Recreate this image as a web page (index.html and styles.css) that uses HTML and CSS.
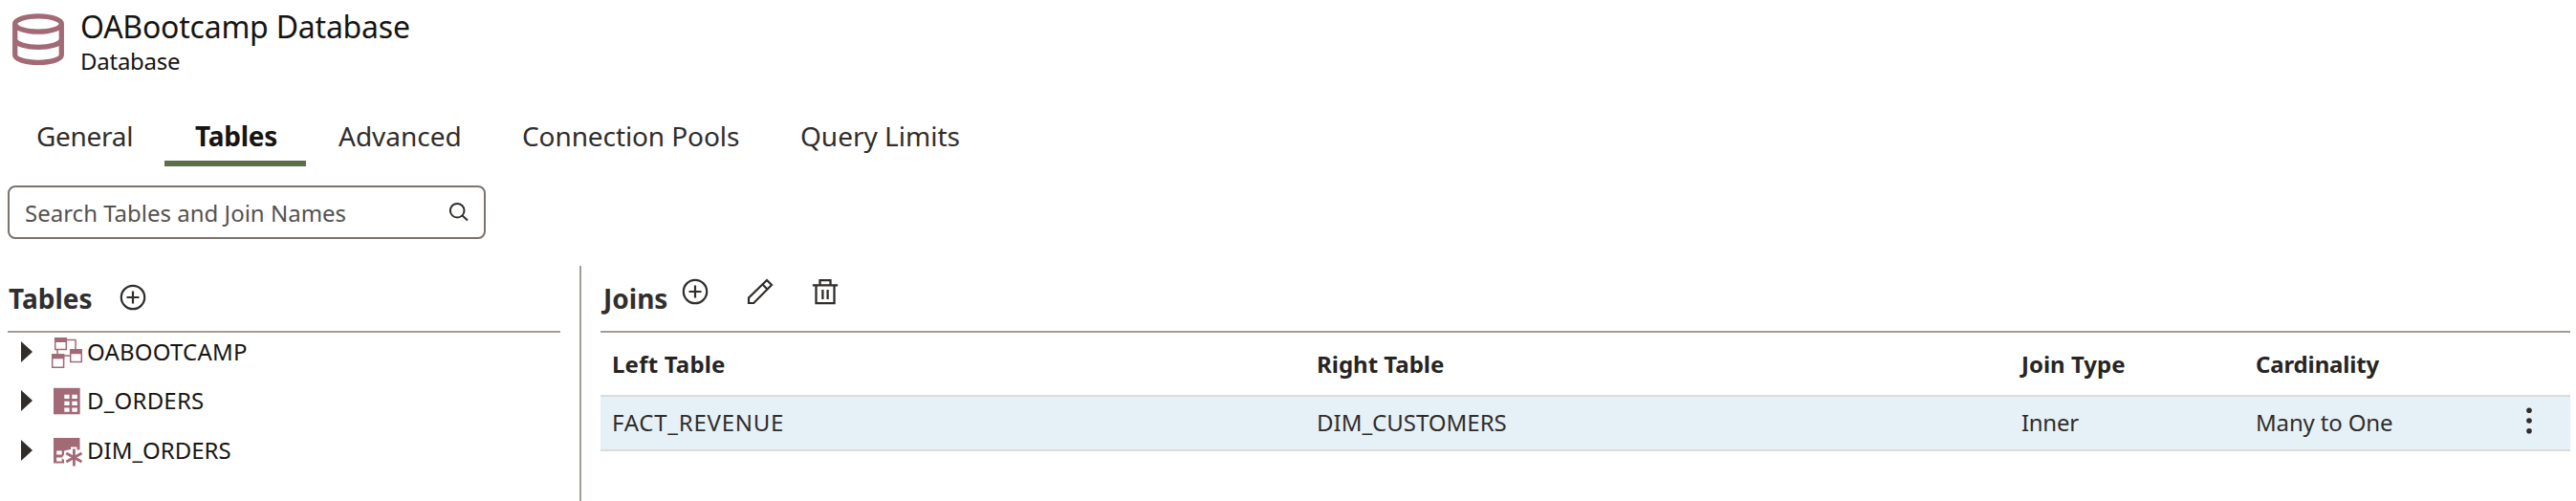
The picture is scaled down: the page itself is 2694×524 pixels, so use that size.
FILE: index.html
```
<!DOCTYPE html>
<html lang="en">
<head>
<meta charset="utf-8">
<title>OABootcamp Database</title>
<link rel="stylesheet" href="styles.css">
</head>
<body>
<div class="page">
  <header class="header">
    <svg class="db-icon" viewBox="12 13 56 56" fill="none" stroke="#a26a76" stroke-width="5.300">
      <ellipse cx="40" cy="25" rx="24.300" ry="8.200"/>
      <path d="M15.700 25v32.500c0 4.500 10.900 7.900 24.300 7.900s24.300-3.400 24.300-7.900V25"/>
      <path d="M15.700 42c1.500 4.200 11.700 7.300 24.300 7.300s22.800-3.100 24.300-7.300"/>
    </svg>
    <div>
      <h1 class="title">OABootcamp Database</h1>
      <p class="subtitle">Database</p>
    </div>
  </header>

  <nav class="tabs">
    <a class="tab general">General</a>
    <a class="tab active">Tables</a>
    <a class="tab">Advanced</a>
    <a class="tab pools">Connection Pools</a>
    <a class="tab">Query Limits</a>
  </nav>

  <div class="search">
    <span>Search Tables and Join Names</span>
    <svg class="search-icon" viewBox="468 210 24 24" fill="none" stroke="#312d2a" stroke-width="2">
      <circle cx="478.200" cy="220.200" r="7.300"/>
      <path d="M483.300 225.300l5.700 5.300"/>
    </svg>
  </div>

  <main class="split">
    <section class="left">
      <div class="bar">
        <h2>Tables</h2>
        <svg class="add" viewBox="0 0 28 28" fill="none" stroke="#312d2a" stroke-width="2.200">
          <circle cx="14" cy="14" r="12.200"/><path d="M14 7.500v13M7.500 14h13"/>
        </svg>
      </div>
      <ul class="tree">
        <li>
          <svg class="arrow" viewBox="0 0 12 22"><path d="M0 0l12 11L0 22z" fill="#312d2a"/></svg>
          <svg class="node" viewBox="52 351 35 35" fill="none" stroke="#a26a76" stroke-width="1.500">
            <path d="M70 355.500h9V365M60 366v5M67 372h6"/>
            <path fill="#fff" d="M57.700 353.700h11.600v11.800H57.700zM54.700 371h11.900v13.300H54.700zM73.700 365.700h11.600v12.900H73.700z"/>
            <path fill="#a26a76" stroke="none" d="M57 353h13v5H57zM54 370.300h13.300v5H54zM73 365h13v5.200H73z"/>
          </svg>
          <span class="wide">OABOOTCAMP</span>
        </li>
        <li>
          <svg class="arrow" viewBox="0 0 12 22"><path d="M0 0l12 11L0 22z" fill="#312d2a"/></svg>
          <svg class="node" viewBox="52 401.500 35 35">
            <path fill="#a26a76" d="M56 405.300h27.700v27.500H56z"/>
            <path fill="#fff" d="M67.300 412.300h5.300v4.200h-5.300zM75.300 412.300h5.500v4.200h-5.500zM67.300 419.200h5.300v4.200h-5.300zM75.300 419.200h5.500v4.200h-5.500zM67.300 426h5.300v4.200h-5.300zM75.300 426h5.500v4.200h-5.500z"/>
          </svg>
          <span class="wide">D_ORDERS</span>
        </li>
        <li>
          <svg class="arrow" viewBox="0 0 12 22"><path d="M0 0l12 11L0 22z" fill="#312d2a"/></svg>
          <svg class="node" viewBox="52 453.500 35 35">
            <path fill="#a26a76" d="M56 457.500h27.500V484H56z"/>
            <path fill="#fff" d="M59.200 471h5.500v4h-5.500zM59.200 478h5.500v4h-5.500zM67 484.500v-4l-2.500-2 2.500-3.500V471l7-1.500V467h6.500v3H84v15z"/>
            <path stroke="#a26a76" stroke-width="2.800" d="M77.400 469v18M69.300 473.500l16.200 9M69.300 482.500l16.200-9"/>
          </svg>
          <span>DIM_ORDERS</span>
        </li>
      </ul>
    </section>

    <section class="right">
      <div class="bar">
        <h2 class="joins">Joins</h2>
        <div class="tools">
          <svg viewBox="0 0 28 28" fill="none" stroke="#312d2a" stroke-width="2.200">
            <circle cx="14" cy="14" r="12.200"/><path d="M14 7.500v13M7.500 14h13"/>
          </svg>
          <svg viewBox="0 0 28 28" fill="none" stroke="#312d2a" stroke-width="2.200">
            <path d="M2 26v-5.500L21 2l5 5L7.200 26zM16.500 6.500l5 5"/>
          </svg>
          <svg viewBox="0 0 28 28" fill="none" stroke="#312d2a" stroke-width="2.300">
            <path d="M.8 7.300h26.400M4.500 7.300v18.800h19V7.300M8.500 7V2.200h11V7M11.400 12v10M16.600 12v10"/>
          </svg>
        </div>
      </div>
      <div class="row head">
        <span class="wide">Left Table</span><span>Right Table</span><span>Join Type</span><span class="tight">Cardinality</span>
      </div>
      <div class="row data">
        <span class="fact">FACT_REVENUE</span><span>DIM_CUSTOMERS</span><span class="inner">Inner</span><span class="tight">Many to One</span>
        <svg class="menu" viewBox="0 0 8 28" fill="#312d2a"><circle cx="4" cy="3.300" r="2.800"/><circle cx="4" cy="14" r="2.800"/><circle cx="4" cy="24.700" r="2.800"/></svg>
      </div>
    </section>
  </main>
</div>
</body>
</html>
```
FILE: styles.css
```
* { box-sizing: border-box; }
body { margin: 0; background: #fff; color: #161513; font: 24px/32px "Noto Sans", sans-serif; }
h1, h2, p, ul { margin: 0; padding: 0; }
svg { display: block; flex: none; }
.page { display: flex; flex-direction: column; height: 524px; padding-right: 6px; overflow: hidden; }

.header { display: flex; height: 110px; padding: 8px 0 0 12px; }
.db-icon { width: 56px; height: 56px; margin: 5px 16px 0 0; }
.title { font-size: 32px; line-height: 40px; font-weight: 400; letter-spacing: -.22px; }
.subtitle { letter-spacing: -.25px; }

.tabs { display: grid; grid-template-columns: 166px 150px 191px 292px auto; height: 64px; padding-left: 6px; font-size: 28px; line-height: 64px; color: #312d2a; flex: none; }
.tab { height: 64px; padding-left: 32px; white-space: nowrap; }
.general { letter-spacing: -.3px; }
.pools { padding-left: 33px; letter-spacing: -.1px; }
.active { width: 148px; border-bottom: 6px solid #5b7049; font-weight: 700; color: #161513; letter-spacing: -.25px; }

.search { display: flex; flex: none; align-items: center; justify-content: space-between; width: 500px; height: 56px; margin: 20px 0 28px 8px; padding: 0 14px 0 16px; border: 2px solid #7a736e; border-radius: 8px; color: #545250; }
.search span { padding-top: 2px; }
.search-icon { width: 24px; height: 24px; }

.split { display: flex; flex: 1; padding-left: 8px; }
.left { width: 578px; margin-right: 20px; }
.right { flex: 1; border-left: 2px solid #a19c96; padding-left: 20px; }
.bar { display: flex; align-items: center; height: 70px; border-bottom: 2px solid #a19c96; }
h2 { padding-left: 1px; font-size: 28px; line-height: 40px; font-weight: 700; color: #312f2e; }
.joins { padding-left: 3px; }
.add { width: 28px; height: 28px; margin: 0 0 2px 28px; }
.tools { display: flex; gap: 40px; margin: 0 0 14px 15px; }
.tools svg { width: 28px; height: 28px; }

.tree { display: flex; flex-direction: column; gap: 11px; list-style: none; padding-left: 14px; }
.tree li { display: flex; align-items: center; height: 40px; }
.tree li:last-child { margin-top: 1px; }
.arrow { width: 12px; height: 22px; margin-right: 18px; }
.node { width: 35px; height: 35px; margin-right: 4px; }
.wide { letter-spacing: .2px; }
.tight { letter-spacing: -.15px; margin-left: -1px; }

.row { display: grid; grid-template-columns: 737px 737px 246px 278px auto; align-items: center; border-bottom: 2px solid #dcdcda; padding-left: 12px; }
.head { height: 67px; font-weight: 700; color: #262524; }
.data { height: 57px; padding-bottom: 2px; background: #e6f1f7; color: #312d2a; }
.fact { letter-spacing: .75px; }
.inner { letter-spacing: -.3px; }
.menu { width: 8px; height: 28px; margin: -4px 0 0 3px; }
```
